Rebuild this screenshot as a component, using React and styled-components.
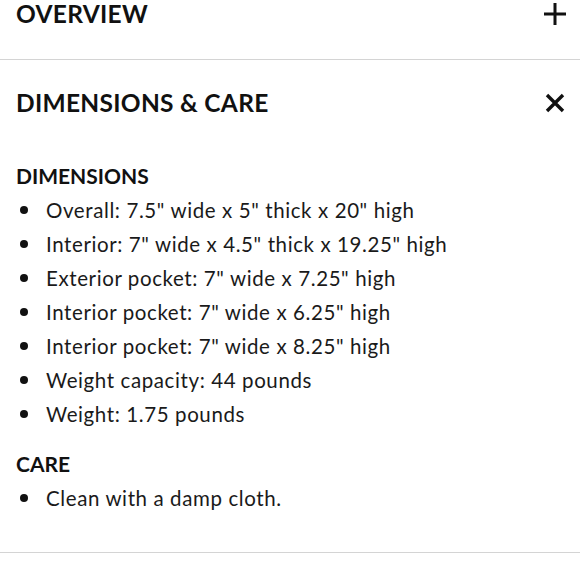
import React from 'react';
import styled, { createGlobalStyle } from 'styled-components';

const GlobalStyle = createGlobalStyle`
  body {
    margin: 0;
    background: #fff;
    font-family: Lato, "Open Sans", sans-serif;
    color: #111;
  }
`;

const Page = styled.div`
  width: 580px;
  height: 580px;
  overflow: hidden;
`;

const Section = styled.section`
  border-bottom: 1px solid #d4d4d4;
`;

const Header = styled.div`
  display: flex;
  align-items: center;
  justify-content: space-between;
  padding: ${(p) => (p.$clipped ? '1px 12px 32px 16px' : '30px 12px 30px 16px')};
`;

const Title = styled.h2`
  margin: 0;
  font-size: 24.5px;
  line-height: 26px;
  font-weight: 700;
  letter-spacing: 0.3px;
`;

const IconBox = styled.span`
  display: flex;
  width: 26px;
  height: 26px;
  align-items: center;
  justify-content: center;
`;

const Body = styled.div`
  padding: 13px 16px 37px;
`;

const SubHeading = styled.h3`
  margin: ${(p) => (p.$first ? '0' : '16px 0 0')};
  font-size: 21px;
  line-height: 34px;
  font-weight: 700;
`;

const List = styled.ul`
  margin: 0;
  padding: 0;
  list-style: none;
`;

const Item = styled.li`
  display: flex;
  align-items: center;
  font-size: 20.5px;
  line-height: 34px;
  font-weight: 400;
  letter-spacing: 0.6px;
  color: #1a1a1a;

  &::before {
    content: '';
    width: 8px;
    height: 8px;
    border-radius: 50%;
    background: #111;
    margin: 0 18px 0 4px;
    flex-shrink: 0;
  }
`;

const PlusIcon = () => (
  <svg width="24" height="24" viewBox="0 0 24 24">
    <path d="M12 1v22M1 12h22" stroke="#111" strokeWidth="3" />
  </svg>
);

const CloseIcon = () => (
  <svg width="20" height="20" viewBox="0 0 20 20">
    <path d="M2 2l16 16M18 2L2 18" stroke="#111" strokeWidth="3.4" />
  </svg>
);

const dimensions = [
  'Overall: 7.5" wide x 5" thick x 20" high',
  'Interior: 7" wide x 4.5" thick x 19.25" high',
  'Exterior pocket: 7" wide x 7.25" high',
  'Interior pocket: 7" wide x 6.25" high',
  'Interior pocket: 7" wide x 8.25" high',
  'Weight capacity: 44 pounds',
  'Weight: 1.75 pounds',
];

const care = ['Clean with a damp cloth.'];

export default function App() {
  return (
    <Page>
      <GlobalStyle />
      <Section>
        <Header $clipped>
          <Title>OVERVIEW</Title>
          <IconBox><PlusIcon /></IconBox>
        </Header>
      </Section>
      <Section>
        <Header>
          <Title>DIMENSIONS &amp; CARE</Title>
          <IconBox><CloseIcon /></IconBox>
        </Header>
        <Body>
          <SubHeading $first>DIMENSIONS</SubHeading>
          <List>
            {dimensions.map((d) => (
              <Item key={d}>{d}</Item>
            ))}
          </List>
          <SubHeading>CARE</SubHeading>
          <List>
            {care.map((c) => (
              <Item key={c}>{c}</Item>
            ))}
          </List>
        </Body>
      </Section>
    </Page>
  );
}
